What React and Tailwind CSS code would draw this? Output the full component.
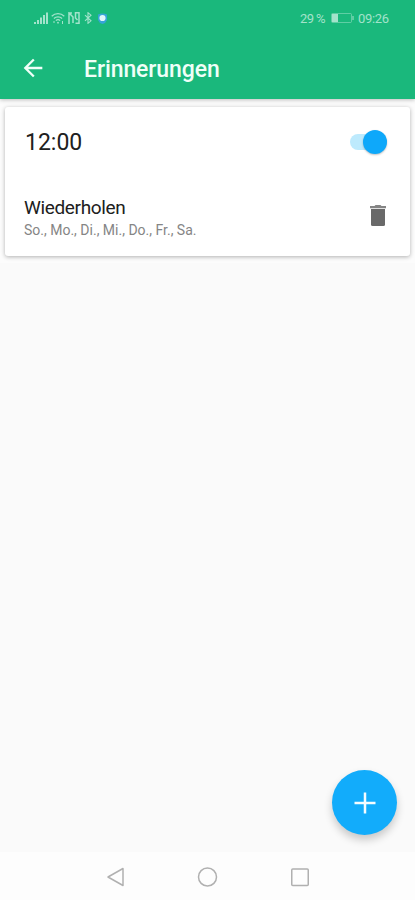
const weekdays = ['So.', 'Mo.', 'Di.', 'Mi.', 'Do.', 'Fr.', 'Sa.'];

function StatusBar() {
  return (
    <div className="flex h-9 items-center justify-between pr-[25px] pl-[34px] text-[#a3e3cb]">
      <div className="flex items-center gap-[3px]">
        <svg className="h-3 w-[14px]" viewBox="0 0 14 12" fill="currentColor">
          <path d="M0 10h2v2H0zM3 8h2v4H3zM6 5.500h2V12H6zM9 3h2v9H9zM12 .5h2V12h-2z" />
        </svg>
        <svg className="h-3 w-[14px]" viewBox="0 0 14 12" fill="none" stroke="currentColor" strokeWidth="1.300">
          <path d="M.7 4.200a9 9 0 0 1 12.600 0M2.900 6.500a6 6 0 0 1 8.200 0M4.900 8.600a3 3 0 0 1 4.200 0" />
          <circle cx="7" cy="10.700" r=".9" fill="currentColor" stroke="none" />
          <path d="M11.500 9v3M3 9v2" strokeWidth="1" />
        </svg>
        <svg className="h-3 w-3" viewBox="0 0 12 12" fill="none" stroke="currentColor" strokeWidth="1.500">
          <path d="M1 12V1l4 4v6M7.500 11.300H11V.7H7.500V6L9.500 8M1 1h3" />
        </svg>
        <svg className="ml-px h-3 w-2" viewBox="0 0 8 12" fill="none" stroke="currentColor" strokeWidth="1.100">
          <path d="M1 3.200 7 8.800 4 11.300V.7l3 2.500L1 8.800" />
        </svg>
        <svg className="ml-[2px] h-[11px] w-[11px]" viewBox="0 0 11 11">
          <path d="M1 1.500Q5.500-.5 10 1.500V7q-1 3-4.500 4Q2 10 1 7z" fill="#36a4d7" />
          <circle cx="5.500" cy="5" r="3.100" fill="#dff7fa" />
        </svg>
      </div>
      <div className="flex items-center text-[13px] leading-none tracking-[-0.2px]">
        <span className="w-[27px] whitespace-nowrap tracking-[-0.6px]">29 %</span>
        <svg className="ml-[4px] h-[10px] w-[23px]" viewBox="0 0 23 10" fill="none" stroke="currentColor">
          <rect x=".5" y=".5" width="20" height="9" rx="1" strokeOpacity=".5" />
          <path d="M22 3v4" />
          <rect x="1" y="1" width="6" height="8" fill="currentColor" stroke="none" />
        </svg>
        <span className="ml-[4px] w-[32px] whitespace-nowrap tracking-[-0.3px]">09:26</span>
      </div>
    </div>
  );
}

function Header() {
  return (
    <header className="relative z-10 h-[99px] bg-[#1ab87c] shadow-[0_1px_4px_rgba(0,0,0,0.25)]">
      <StatusBar />
      <div className="flex h-[63px] items-center pl-[19px]">
        <button aria-label="Zurück" className="text-[#effff8]">
          <svg className="h-7 w-7" viewBox="0 0 24 24" fill="currentColor">
            <path d="M20 11H7.830l5.590-5.590L12 4l-8 8 8 8 1.410-1.410L7.830 13H20v-2z" />
          </svg>
        </button>
        <h1 className="ml-[37px] pt-[5px] text-[23px] font-medium tracking-[-0.1px] text-[#effff8]">Erinnerungen</h1>
      </div>
    </header>
  );
}

function ReminderCard({ time, days }) {
  return (
    <section className="mx-[5px] mt-2 h-[149px] rounded-[3px] bg-white pr-[23px] pl-[19px] shadow-[0_1px_4px_rgba(0,0,0,0.3)]">
      <div className="flex h-[70px] items-center justify-between">
        <span className="pt-[3px] pl-px text-[23px] text-[#202020]">{time}</span>
        <button role="switch" aria-checked="true" aria-label="Aktiv" className="flex h-4 w-[37px] items-center justify-end rounded-full bg-[#bdeafd]">
          <span className="h-6 w-6 shrink-0 rounded-full bg-[#0ea8fa] shadow-[0_1px_2px_rgba(0,0,0,0.25)]" />
        </button>
      </div>
      <div className="flex h-[79px] items-start justify-between pt-[19px]">
        <div>
          <p className="text-[19px] leading-6 tracking-[-0.35px] text-[#202020]">Wiederholen</p>
          <p className="text-sm leading-5 text-[#858585]">{days.join(', ')}</p>
        </div>
        <button aria-label="Löschen" className="mt-[9px] mr-[1px]">
          <svg className="h-[22px] w-4" viewBox="0 0 16 22">
            <path fill="#696969" d="M1 4h14v15.500a1.500 1.500 0 0 1-1.500 1.500h-11A1.500 1.500 0 0 1 1 19.500z" />
            <path fill="#858585" d="M0 1h4.500l1-1h5l1 1H16v2.300H0z" />
          </svg>
        </button>
      </div>
    </section>
  );
}

function NavBar() {
  return (
    <nav className="flex h-12 items-center bg-[#fdfdfd] pt-[2px] pl-[105px] text-[#b0b0b0]">
      <svg className="h-5 w-5" viewBox="0 0 20 20" fill="none" stroke="currentColor" strokeWidth="1.500" strokeLinejoin="round">
        <path d="M18 1.500v17L3 10z" />
      </svg>
      <svg className="ml-[72px] h-[21px] w-[21px]" viewBox="0 0 21 21" fill="none" stroke="currentColor" strokeWidth="1.500">
        <circle cx="10.500" cy="10" r="9" />
      </svg>
      <svg className="ml-[72px] h-5 w-5" viewBox="0 0 20 20" fill="none" stroke="currentColor" strokeWidth="1.500">
        <rect x="1.750" y="2" width="16.500" height="16.500" rx="1" />
      </svg>
    </nav>
  );
}

export default function App() {
  return (
    <div className="flex h-[900px] w-[415px] flex-col overflow-hidden bg-[#fafafa] font-['Roboto','Liberation_Sans',sans-serif]">
      <Header />
      <main className="relative flex-1">
        <div className="flow-root h-[164px] bg-[#fcfcfc]">
          <ReminderCard time="12:00" days={weekdays} />
        </div>
        {/* Floating add button */}
        <button
          aria-label="Hinzufügen"
          className="absolute right-[18px] bottom-[17px] flex h-[65px] w-[65px] items-center justify-center rounded-full bg-[#12acfb] shadow-[0_5px_9px_rgba(0,0,0,0.2)]"
        >
          <svg className="h-[22px] w-[22px]" viewBox="0 0 22 22" fill="none" stroke="#f4fcff" strokeWidth="2.500">
            <path d="M11 .5v21M.5 11h21" />
          </svg>
        </button>
      </main>
      <NavBar />
    </div>
  );
}
